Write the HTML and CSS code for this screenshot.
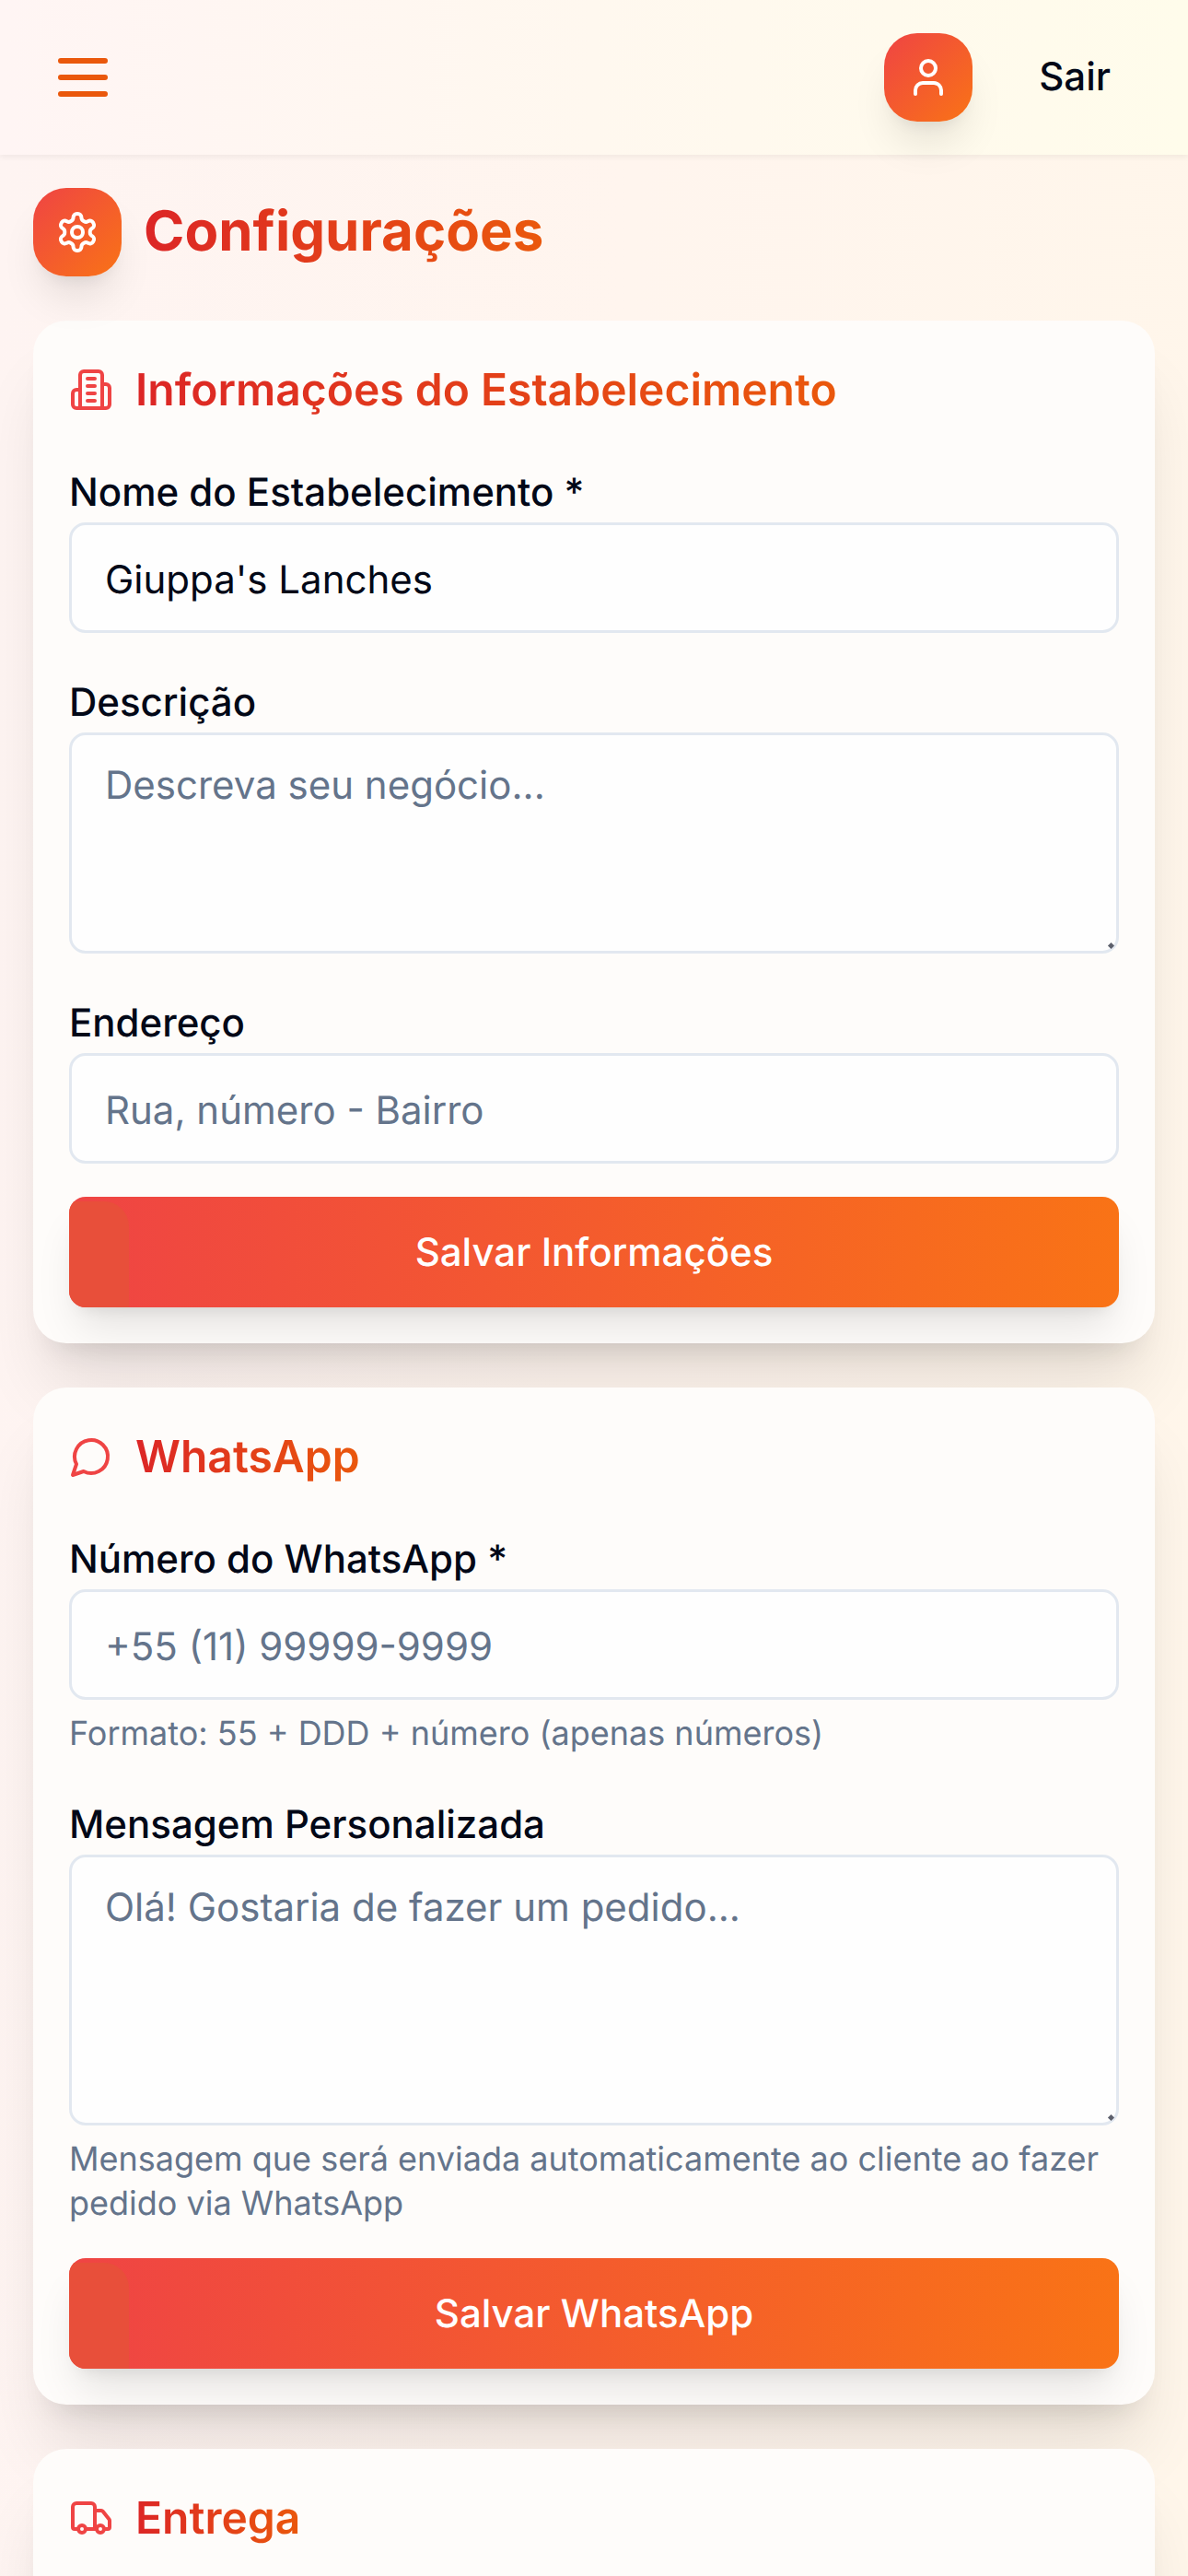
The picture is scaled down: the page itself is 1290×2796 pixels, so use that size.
FILE: index.html
```html
<!DOCTYPE html>
<html lang="pt-BR">
<head>
<meta charset="utf-8">
<title>Configurações</title>
<link rel="stylesheet" href="styles.css">
</head>
<body>
<header class="topbar">
  <button class="menu-btn" aria-label="Menu">
    <svg class="menu-icon" viewBox="0 0 24 24" fill="none"><path d="M4 6h16M4 12h16M4 18h16"/></svg>
  </button>
  <div class="top-actions">
    <div class="tile">
      <svg class="tile-icon" viewBox="0 0 24 24" fill="none"><path d="M19 21v-2a4 4 0 0 0-4-4H9a4 4 0 0 0-4 4v2"/><circle cx="12" cy="7" r="4"/></svg>
    </div>
    <span class="logout">Sair</span>
  </div>
</header>
<main class="page">
  <div class="page-head">
    <div class="tile">
      <svg class="tile-icon" viewBox="0 0 24 24" fill="none"><path d="M12.220 2h-.440a2 2 0 0 0-2 2v.180a2 2 0 0 1-1 1.730l-.430.250a2 2 0 0 1-2 0l-.150-.080a2 2 0 0 0-2.730.730l-.220.380a2 2 0 0 0 .730 2.730l.150.100a2 2 0 0 1 1 1.720v.510a2 2 0 0 1-1 1.740l-.150.090a2 2 0 0 0-.730 2.730l.220.380a2 2 0 0 0 2.730.730l.150-.080a2 2 0 0 1 2 0l.430.250a2 2 0 0 1 1 1.730V20a2 2 0 0 0 2 2h.440a2 2 0 0 0 2-2v-.180a2 2 0 0 1 1-1.730l.430-.250a2 2 0 0 1 2 0l.150.080a2 2 0 0 0 2.730-.730l.220-.390a2 2 0 0 0-.730-2.730l-.150-.080a2 2 0 0 1-1-1.740v-.500a2 2 0 0 1 1-1.740l.150-.090a2 2 0 0 0 .730-2.730l-.220-.380a2 2 0 0 0-2.730-.730l-.150.080a2 2 0 0 1-2 0l-.430-.250a2 2 0 0 1-1-1.730V4a2 2 0 0 0-2-2z"/><circle cx="12" cy="12" r="3"/></svg>
    </div>
    <h1 class="page-title">Configurações</h1>
  </div>

  <section class="card">
    <h2 class="card-title">
      <svg class="card-icon" viewBox="0 0 24 24" fill="none"><path d="M6 22V4a2 2 0 0 1 2-2h8a2 2 0 0 1 2 2v18Z"/><path d="M6 12H4a2 2 0 0 0-2 2v6a2 2 0 0 0 2 2h2"/><path d="M18 9h2a2 2 0 0 1 2 2v9a2 2 0 0 1-2 2h-2"/><path d="M10 6h4M10 10h4M10 14h4M10 18h4"/></svg>
      <span class="grad-text">Informações do Estabelecimento</span>
    </h2>
    <div class="field">
      <label class="label">Nome do Estabelecimento *</label>
      <input class="control" value="Giuppa's Lanches">
    </div>
    <div class="field">
      <label class="label">Descrição</label>
      <div class="area-wrap"><textarea class="control area-short" placeholder="Descreva seu negócio..."></textarea></div>
    </div>
    <div class="field">
      <label class="label">Endereço</label>
      <input class="control" placeholder="Rua, número - Bairro">
    </div>
    <button class="save">Salvar Informações</button>
  </section>

  <section class="card">
    <h2 class="card-title">
      <svg class="card-icon" viewBox="0 0 24 24" fill="none"><path d="M7.900 20A9 9 0 1 0 4 16.100L2 22Z"/></svg>
      <span class="grad-text">WhatsApp</span>
    </h2>
    <div class="field">
      <label class="label">Número do WhatsApp *</label>
      <input class="control" placeholder="+55 (11) 99999-9999">
      <p class="hint">Formato: 55 + DDD + número (apenas números)</p>
    </div>
    <div class="field">
      <label class="label">Mensagem Personalizada</label>
      <div class="area-wrap"><textarea class="control area-tall" placeholder="Olá! Gostaria de fazer um pedido..."></textarea></div>
      <p class="hint">Mensagem que será enviada automaticamente ao cliente ao fazer pedido via WhatsApp</p>
    </div>
    <button class="save">Salvar WhatsApp</button>
  </section>

  <section class="card card-cut">
    <h2 class="card-title">
      <svg class="card-icon" viewBox="0 0 24 24" fill="none"><path d="M14 18V6a2 2 0 0 0-2-2H4a2 2 0 0 0-2 2v11a1 1 0 0 0 1 1h2"/><path d="M15 18H9"/><path d="M19 18h2a1 1 0 0 0 1-1v-3.650a1 1 0 0 0-.220-.624l-3.480-4.350A1 1 0 0 0 17.520 8H14"/><circle cx="17" cy="18" r="2"/><circle cx="7" cy="18" r="2"/></svg>
      <span class="grad-text">Entrega</span>
    </h2>
  </section>
</main>
</body>
</html>
```
FILE: styles.css
```css
* { box-sizing: border-box; margin: 0; padding: 0; }
html, body { height: 2796px; overflow: hidden; }
body {
  font-family: Inter, "Liberation Sans", sans-serif;
  color: #020817;
  background: linear-gradient(92deg, #fef4f2 0%, #fff5ee 50%, #fff6ea 100%);
  text-rendering: geometricPrecision;
}
.topbar {
  height: 168px;
  display: flex;
  align-items: center;
  justify-content: space-between;
  padding: 0 84px 0 54px;
  background: linear-gradient(90deg, #fff5f4 0%, #fff8ef 50%, #fffceb 100%);
  box-shadow: 0 3px 6px rgba(0,0,0,.05);
  position: relative;
}
.menu-btn { background: none; border: 0; display: flex; }
.menu-icon { width: 72px; height: 72px; stroke: #ea580c; stroke-width: 2; stroke-linecap: round; }
.top-actions { display: flex; align-items: center; gap: 72px; }
.tile {
  width: 96px; height: 96px; flex: none;
  border-radius: 36px;
  display: flex; align-items: center; justify-content: center;
  background: linear-gradient(135deg, #ef4444, #f97316);
  box-shadow: 0 30px 45px -9px rgba(0,0,0,.1), 0 12px 18px -12px rgba(0,0,0,.1);
}
.tile-icon { width: 48px; height: 48px; stroke: #fff; stroke-width: 2; stroke-linecap: round; stroke-linejoin: round; }
.logout { font-size: 42px; font-weight: 500; line-height: 60px; }
.page { padding: 36px 36px 0; }
.page-head { display: flex; align-items: center; gap: 24px; margin-bottom: 48px; }
.page-title {
  font-size: 60px; font-weight: 700; line-height: 84px;
  margin-top: -2px;
  background: linear-gradient(90deg, #dc2626, #ea580c);
  -webkit-background-clip: text; background-clip: text; color: transparent;
}
.card {
  background: #fefcfa;
  border-radius: 36px;
  padding: 39px;
  margin-bottom: 48px;
  box-shadow: 0 60px 75px -15px rgba(0,0,0,.1), 0 24px 30px -18px rgba(0,0,0,.1);
}
.card-cut { min-height: 400px; }
.card-title { display: flex; align-items: center; gap: 24px; font-size: 48px; font-weight: 600; line-height: 72px; margin-bottom: 45px; }
.grad-text {
  background: linear-gradient(90deg, #dc2626, #ea580c);
  -webkit-background-clip: text; background-clip: text; color: transparent;
}
.card-icon { width: 48px; height: 48px; stroke: #ef4444; stroke-width: 2; stroke-linecap: round; stroke-linejoin: round; flex: none; }
.field { margin-bottom: 45px; display: flex; flex-direction: column; }
.field:nth-last-child(2) { margin-bottom: 36px; }
.label { font-size: 42px; font-weight: 500; line-height: 62px; margin-bottom: 1px; }
.control {
  display: block; width: 100%;
  font: 400 42px/63px Inter, "Liberation Sans", sans-serif;
  color: #020817;
  background: #fefefe;
  border: 3px solid #e2e8f0;
  border-radius: 18px;
  padding: 0 36px;
  outline: 0;
  text-rendering: geometricPrecision;
}
input.control { height: 120px; padding-top: 4px; }
textarea.control { padding-top: 23px; resize: none; }
.control::placeholder { color: #64748b; opacity: 1; }
.area-wrap { position: relative; }
.area-wrap::after {
  content: "";
  position: absolute; right: 6px; bottom: 6px;
  width: 5px; height: 5px;
  background: #5c5f6b;
  transform: rotate(45deg);
}
.area-short { height: 240px; }
.area-tall { height: 294px; }
.hint { font-size: 36px; line-height: 48px; color: #64748b; margin-top: 12px; }
.save {
  position: relative;
  display: block; width: 100%; height: 120px;
  border: 0; border-radius: 18px;
  font: 500 42px Inter, "Liberation Sans", sans-serif;
  color: #fff;
  background: linear-gradient(90deg, #ef4444, #f97316);
  box-shadow: 0 30px 45px -9px rgba(0,0,0,.1), 0 12px 18px -12px rgba(0,0,0,.1);
  overflow: hidden;
  text-rendering: geometricPrecision;
}
.save::before {
  content: "";
  position: absolute; left: 0; top: 5px; bottom: 0;
  width: 65px;
  border-top-right-radius: 27px;
  background: #e84f3a;
}
```
